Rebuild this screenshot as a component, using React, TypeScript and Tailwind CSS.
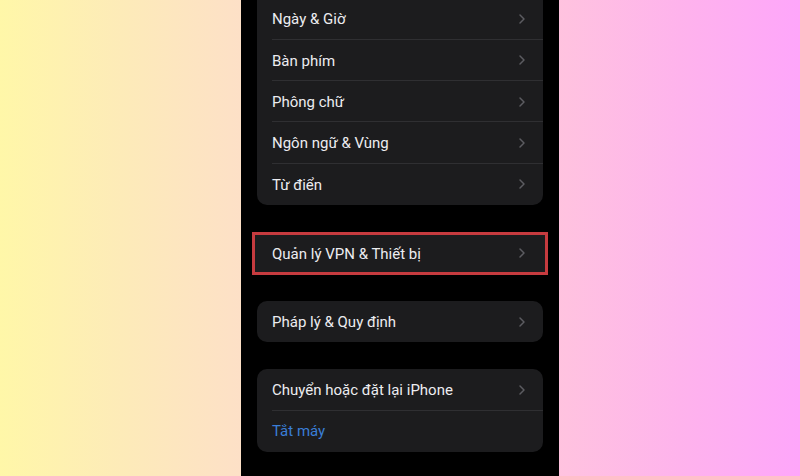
import { ChevronRight } from 'lucide-react'

type Row = { label: string; chevron?: boolean; blue?: boolean }

function SettingsRow({ row, last }: { row: Row; last: boolean }) {
  return (
    <div className="relative flex h-[41.3px] items-center justify-between pl-[15px] pr-[13px]">
      <span className={row.blue ? 'pt-px text-[15px] text-[#3a7ed6]' : 'pt-px text-[15px] text-[#ececf0]'}>
        {row.label}
      </span>
      {row.chevron !== false && (
        <ChevronRight className="h-[16px] w-[16px] text-[#5c5c61]" strokeWidth={2.2} />
      )}
      {!last && <div className="absolute bottom-0 left-[15px] right-0 h-px bg-[#2f2f32]" />}
    </div>
  )
}

function Group({ rows, className = '' }: { rows: Row[]; className?: string }) {
  return (
    <div className={`overflow-hidden rounded-[10px] bg-[#1c1c1e] ${className}`}>
      {rows.map((r, i) => (
        <SettingsRow key={r.label} row={r} last={i === rows.length - 1} />
      ))}
    </div>
  )
}

export default function App() {
  return (
    <div
      className="flex h-[476px] w-[800px] overflow-hidden"
      style={{ fontFamily: 'Roboto, "Noto Sans", sans-serif' }}
    >
      {/* left backdrop */}
      <div className="h-full w-[241px] bg-gradient-to-r from-[#fff7a8] via-[#fdebb8] to-[#fde0c7]" />

      {/* phone screen */}
      <div className="flex h-full w-[318px] flex-col bg-black px-4">
        <Group
          className="-mt-[1.5px] rounded-t-none"
          rows={[
            { label: 'Ngày & Giờ' },
            { label: 'Bàn phím' },
            { label: 'Phông chữ' },
            { label: 'Ngôn ngữ & Vùng' },
            { label: 'Từ điển' },
          ]}
        />

        <div className="-mx-[5px] mt-[27px] h-[43px] border-[3px] border-[#c63b3f] bg-[#1c1c1e] px-[2px]">
          <div className="flex h-full items-center justify-between pl-[15px] pr-[13px]">
            <span className="pt-px text-[15px] text-[#ececf0]">Quản lý VPN & Thiết bị</span>
            <ChevronRight className="h-[16px] w-[16px] text-[#5c5c61]" strokeWidth={2.2} />
          </div>
        </div>

        <Group className="mt-[26px]" rows={[{ label: 'Pháp lý & Quy định' }]} />

        <Group
          className="mt-[27px]"
          rows={[
            { label: 'Chuyển hoặc đặt lại iPhone' },
            { label: 'Tắt máy', chevron: false, blue: true },
          ]}
        />
      </div>

      {/* right backdrop */}
      <div className="h-full w-[241px] bg-gradient-to-r from-[#ffc3df] via-[#feb3ec] to-[#fea6fa]" />
    </div>
  )
}
